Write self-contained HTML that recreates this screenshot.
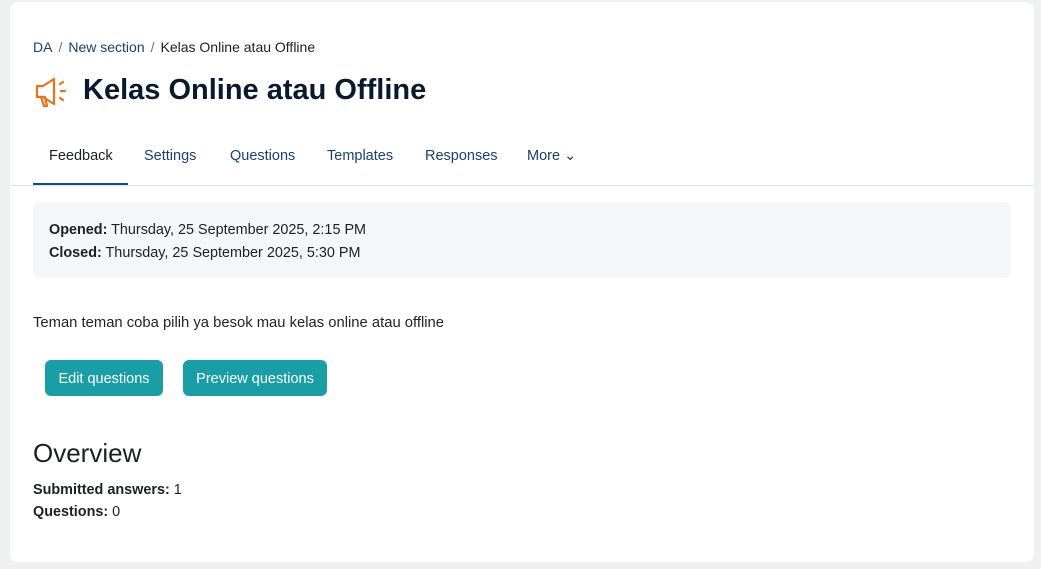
<!DOCTYPE html>
<html><head><style>
body{margin:0;background:#eef0f2;font-family:"Liberation Sans",sans-serif;color:#1d2125;width:1041px;height:569px;overflow:hidden;position:relative}
.card{position:absolute;left:10px;top:2px;width:1024px;height:560px;background:#fff;border-radius:8px}
.a{position:absolute;white-space:nowrap}
.bc{top:37px;left:23px;font-size:14px;color:#1b3f70}
.bc span{color:#6a737b;margin:0 6px}
h1{position:absolute;left:73px;top:72px;margin:0;font-size:29px;font-weight:bold;color:#0a1a2e}
.tabs{top:146px;left:23px;font-size:14.5px;color:#1b3f70}
.tabs span{position:absolute}
.ul{position:absolute;left:23px;top:181px;width:95px;height:3px;background:#0f4c8a}
.line{position:absolute;left:0;top:183px;width:1024px;height:1px;background:#dee2e6}
.box{position:absolute;left:23px;top:200px;width:978px;height:76px;background:#f5f6f8;border-radius:6px}
.t{font-size:14.4px}
.btn{position:absolute;top:358px;height:36px;background:#1a9ea6;color:#fff;border-radius:6px;font-size:14.5px;line-height:38px;text-align:center}
</style></head><body>
<div class="card">
<div class="a bc">DA<span>/</span>New section<span>/</span><b style="font-weight:normal;color:#1d2125">Kelas Online atau Offline</b></div>
<svg class="a" style="left:24px;top:74px" width="38" height="34" viewBox="0 0 38 34" fill="none" stroke="#e8711a" stroke-width="2.2" stroke-linejoin="round" stroke-linecap="round"><path d="M3 10h6l11-7v25L9 21H3z"/><path d="M7 21l3 9h3l-2-9"/><path d="M26 8l3-2M27 15h4M26 22l3 2"/></svg>
<h1>Kelas Online atau Offline</h1>
<div class="a tabs"><span style="left:16px;color:#1d2125">Feedback</span><span style="left:111px">Settings</span><span style="left:197px">Questions</span><span style="left:294px">Templates</span><span style="left:392px">Responses</span><span style="left:494px">More ⌄</span></div>
<div class="ul"></div><div class="line"></div>
<div class="box"></div>
<div class="a t" style="left:39px;top:220px"><b>Opened:</b> Thursday, 25 September 2025, 2:15 PM</div>
<div class="a t" style="left:39px;top:243px"><b>Closed:</b> Thursday, 25 September 2025, 5:30 PM</div>
<div class="a t" style="left:23px;top:313px;font-size:14.8px">Teman teman coba pilih ya besok mau kelas online atau offline</div>
<div class="btn" style="left:35px;width:118px">Edit questions</div>
<div class="btn" style="left:173px;width:144px">Preview questions</div>
<div class="a" style="left:23px;top:436px;font-size:26px">Overview</div>
<div class="a t" style="left:23px;top:480px"><b>Submitted answers:</b> 1</div>
<div class="a t" style="left:23px;top:502px"><b>Questions:</b> 0</div>
</div>
</body></html>
